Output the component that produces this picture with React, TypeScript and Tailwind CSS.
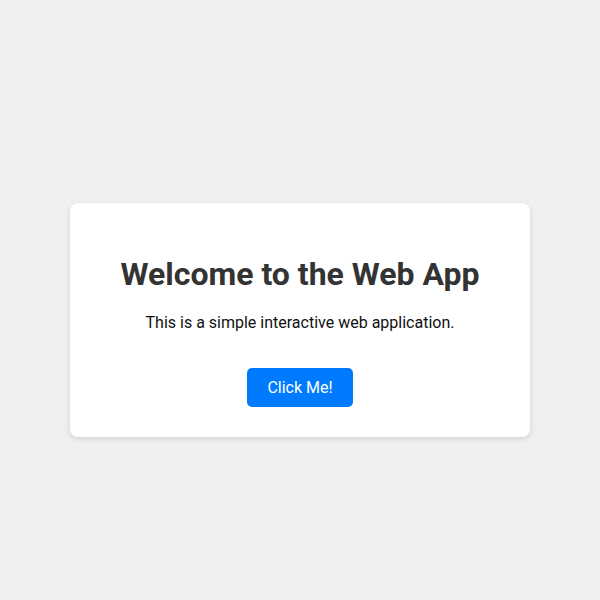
export default function App() {
  return (
    <div className="min-h-screen bg-[#f0f0f0] flex items-center justify-center pt-[40px] font-['Roboto',sans-serif]">
      <div className="w-[460px] bg-white rounded-lg shadow-[0_2px_6px_rgba(0,0,0,0.12)] px-[30px] pt-[52px] pb-[30px] flex flex-col items-center text-center">
        <h1 className="text-[32px] leading-[normal] font-bold text-[#333]">
          Welcome to the Web App
        </h1>
        <p className="mt-[20px] text-base leading-[normal] text-[#111]">
          This is a simple interactive web application.
        </p>
        <button className="mt-[36px] px-5 py-[10px] bg-[#007bff] text-white text-base leading-[normal] rounded-[5px]">
          Click Me!
        </button>
      </div>
    </div>
  );
}
